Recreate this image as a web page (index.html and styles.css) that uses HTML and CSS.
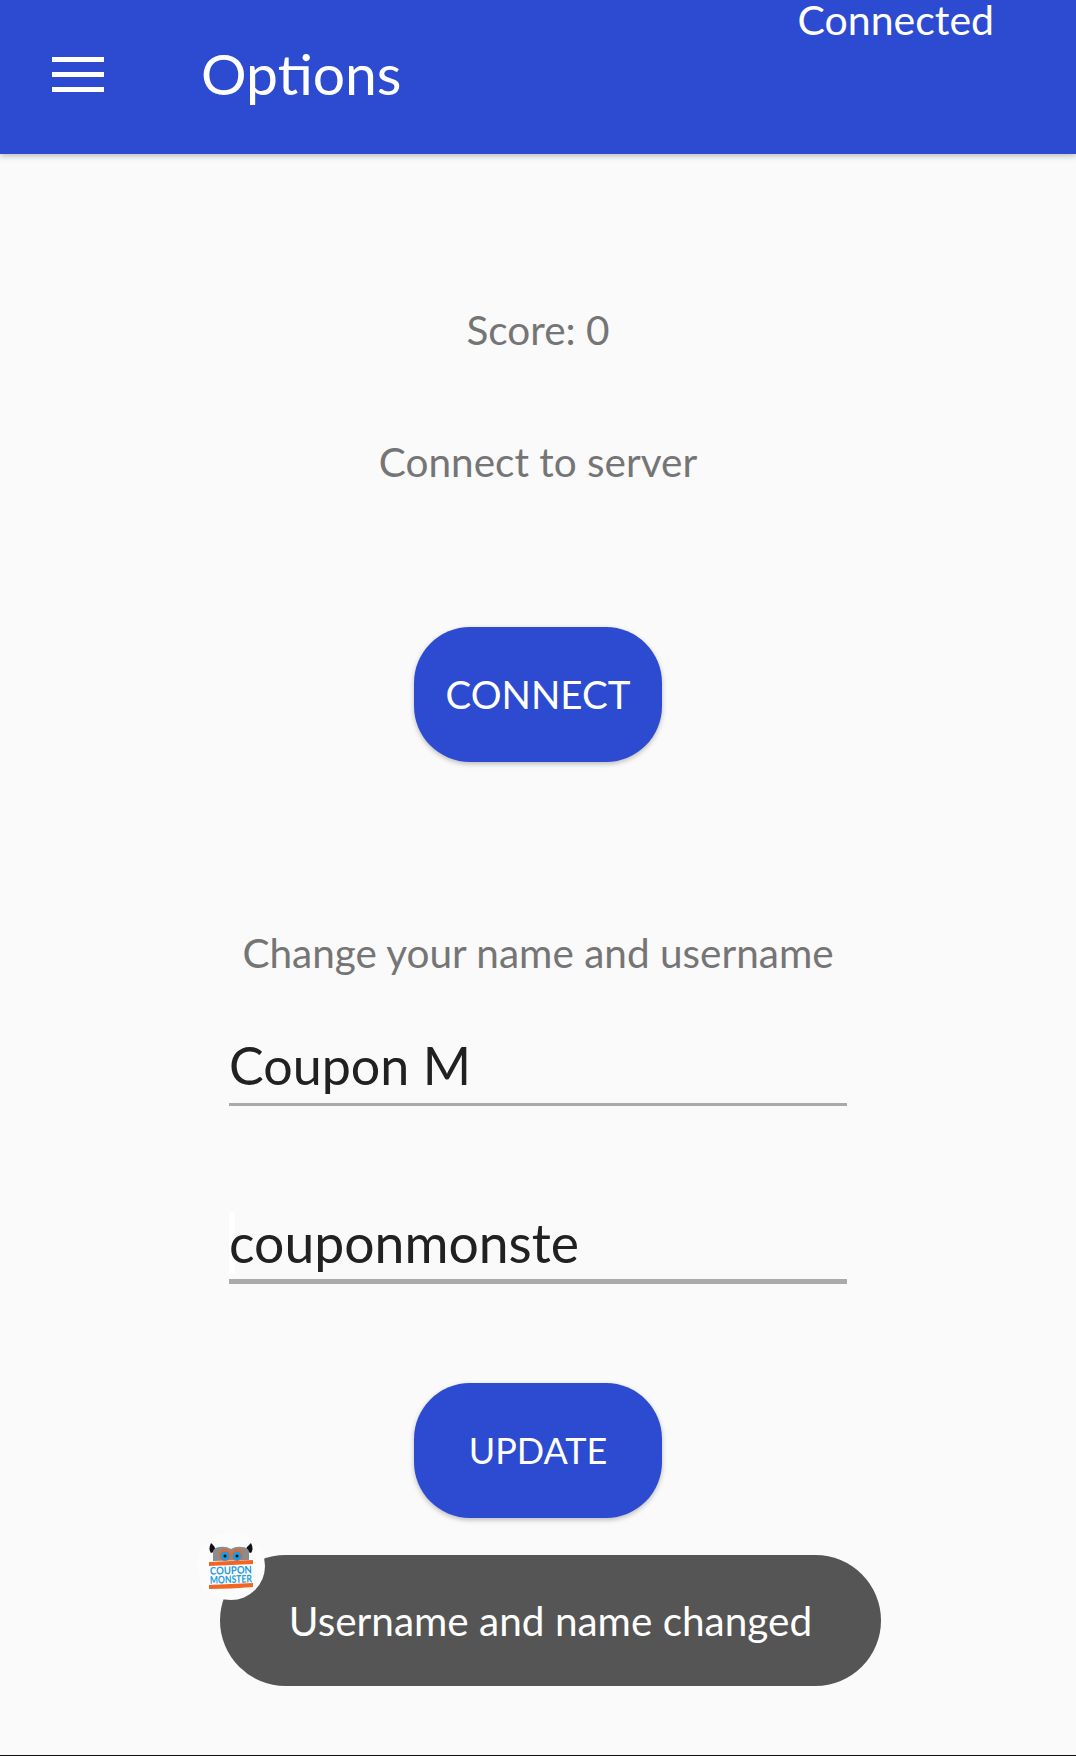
FILE: index.html

```html
<!DOCTYPE html>
<html lang="en">
<head>
  <meta charset="UTF-8" />
  <meta name="viewport" content="width=device-width, initial-scale=1.0"/>
  <title>Options</title>
  <link rel="stylesheet" href="styles.css">
</head>
<body>
  <div class="screen">
    <header class="toolbar">
      <div class="menu-icon">
        <span></span>
        <span></span>
        <span></span>
      </div>
      <h1 class="title">Options</h1>
      <div class="status">Connected</div>
    </header>

    <main class="content">
      <p class="score">Score: 0</p>
      <p class="connect-label">Connect to server</p>
      <button class="btn btn-connect">CONNECT</button>
      <p class="change-label">Change your name and username</p>
      <div class="field field-name">Coupon M</div>
      <div class="field field-user"><span class="caret"></span><span class="field-text">couponmonste</span></div>
      <button class="btn btn-update">UPDATE</button>
    </main>

    <div class="toast">
      <div class="toast-logo">
        <svg width="48" height="48" viewBox="0 0 48 48">
          <path d="M4 11 Q1 7 4 1 Q8 4 9 9 Z" fill="#111"/>
          <path d="M44 11 Q47 7 44 1 Q40 4 38 9 Z" fill="#111"/>
          <path d="M6 19 V9 Q8 5 13 5 Q19 4 24 7 Q29 4 35 5 Q40 5 42 9 V18 Z" fill="#8c8c8c"/>
          <circle cx="18" cy="13" r="6" fill="#f26522"/>
          <circle cx="30" cy="13" r="6" fill="#f26522"/>
          <circle cx="18" cy="14" r="4.5" fill="#1c9be0"/>
          <circle cx="30" cy="14" r="4.5" fill="#1c9be0"/>
          <circle cx="18" cy="14" r="1.5" fill="#111"/>
          <circle cx="30" cy="14" r="1.5" fill="#111"/>
          <path d="M2 20 L46 18 V22 L2 24 Z" fill="#f26522"/>
          <text class="logo-text" x="3" y="32" textLength="42" lengthAdjust="spacingAndGlyphs" transform="rotate(-2 24 32)">COUPON</text>
          <text class="logo-text" x="3" y="41" textLength="42" lengthAdjust="spacingAndGlyphs" transform="rotate(-2 24 41)">MONSTER</text>
          <path d="M2 43 L46 41 V45 Q24 47 2 47 Z" fill="#f26522"/>
        </svg>
      </div>
      Username and name changed
    </div>
  </div>
</body>
</html>
```

FILE: styles.css

```css
body {
  margin: 0;
  font-family: 'Lato', sans-serif;
  background: #fafafa;
}
.screen {
  position: relative;
  height: 1755px;
  overflow: hidden;
  border-bottom: 1px solid #111;
}
.toolbar {
  display: flex;
  height: 154px;
  background: #2c4bd0;
  color: white;
  box-shadow: 0 2px 6px rgba(0, 0, 0, 0.25);
}
.menu-icon {
  display: flex;
  flex-direction: column;
  gap: 10px;
  width: 52px;
  margin: 57px 0 0 52px;
}
.menu-icon span {
  height: 5px;
  background: white;
}
.title {
  margin: 39px 0 0 97px;
  font-size: 57px;
  line-height: 68px;
  font-weight: 400;
}
.status {
  margin: 0 82px 0 auto;
  font-size: 41px;
  line-height: 39px;
}
.content {
  display: flex;
  flex-direction: column;
  align-items: center;
}
.score, .connect-label, .change-label {
  margin: 0;
  color: #757575;
  font-size: 40.5px;
  line-height: 46px;
}
.score {
  margin-top: 153px;
}
.connect-label {
  margin-top: 86px;
}
.change-label {
  margin-top: 92px;
}
.btn {
  width: 248px;
  height: 135px;
  padding: 0 0 2px;
  border: none;
  border-radius: 56px;
  background: #2c4bd0;
  color: white;
  font-family: inherit;
  font-size: 38.5px;
  box-shadow: 0 2px 5px rgba(0, 0, 0, 0.25);
}
.btn-connect {
  margin-top: 142px;
  margin-bottom: 76px;
}
.field {
  box-sizing: border-box;
  width: 618px;
  color: #212121;
  font-size: 52px;
  line-height: 64px;
}
.field-name {
  margin-top: 57px;
  padding-bottom: 6px;
  border-bottom: 3px solid #aaa;
}
.field-user {
  position: relative;
  margin-top: 104px;
  padding-bottom: 5px;
  border-bottom: 5px solid #aaa;
  font-size: 53.5px;
}
.field-text {
  position: relative;
}
.caret {
  position: absolute;
  left: 0;
  bottom: 5px;
  width: 6px;
  height: 62px;
  background: white;
}
.btn-update {
  margin-top: 99px;
  font-size: 36px;
}
.toast {
  position: absolute;
  left: 220px;
  top: 1555px;
  width: 661px;
  height: 131px;
  border-radius: 66px;
  background: #555;
  color: white;
  font-size: 40.5px;
  line-height: 131px;
  text-align: center;
}
.toast-logo {
  position: absolute;
  left: -23px;
  top: -23px;
  display: flex;
  align-items: center;
  justify-content: center;
  width: 68px;
  height: 68px;
  border-radius: 50%;
  background: #fcfcfc;
}
.logo-text {
  fill: #1c9be0;
  font-size: 10.5px;
  font-weight: 700;
}
```
